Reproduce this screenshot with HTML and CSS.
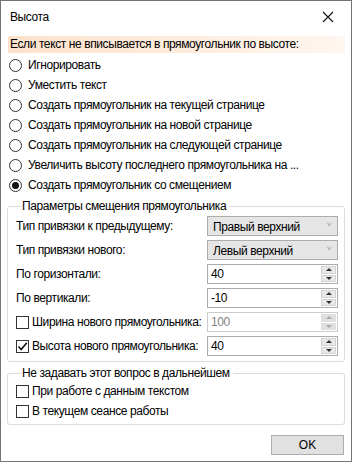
FILE: index.html
```html
<!DOCTYPE html>
<html lang="ru">
<head>
  <meta charset="UTF-8">
  <title>Высота</title>
  <link rel="stylesheet" href="styles.css">
</head>
<body>
  <div class="window">
    <div class="titlebar">
      <span class="title">Высота</span>
      <svg class="close" width="12" height="12" viewBox="0 0 12 12">
        <path d="M1 1 L11 11 M11 1 L1 11" stroke="#111" stroke-width="1.1" fill="none"/>
      </svg>
    </div>
    <div class="content">
      <div class="banner">Если текст не вписывается в прямоугольник по высоте:</div>
      <div class="radios">
        <label class="radio"><span class="dot"></span>Игнорировать</label>
        <label class="radio"><span class="dot"></span>Уместить текст</label>
        <label class="radio"><span class="dot"></span>Создать прямоугольник на текущей странице</label>
        <label class="radio"><span class="dot"></span>Создать прямоугольник на новой странице</label>
        <label class="radio"><span class="dot"></span>Создать прямоугольник на следующей странице</label>
        <label class="radio"><span class="dot"></span>Увеличить высоту последнего прямоугольника на ...</label>
        <label class="radio"><span class="dot on"></span>Создать прямоугольник со смещением</label>
      </div>

      <fieldset class="group params">
        <legend>Параметры смещения прямоугольника</legend>
        <div class="row">
          <span class="label">Тип привязки к предыдущему:</span>
          <div class="combo">Правый верхний<span class="chev">&#709;</span></div>
        </div>
        <div class="row">
          <span class="label">Тип привязки нового:</span>
          <div class="combo">Левый верхний<span class="chev">&#709;</span></div>
        </div>
        <div class="row spaced">
          <span class="label">По горизонтали:</span>
          <div class="spin"><span class="val">40</span><span class="btns"><i class="up"></i><i class="down"></i></span></div>
        </div>
        <div class="row">
          <span class="label">По вертикали:</span>
          <div class="spin"><span class="val">-10</span><span class="btns"><i class="up"></i><i class="down"></i></span></div>
        </div>
        <div class="row">
          <span class="label"><span class="check"></span>Ширина нового прямоугольника:</span>
          <div class="spin disabled"><span class="val">100</span><span class="btns"><i class="up"></i><i class="down"></i></span></div>
        </div>
        <div class="row">
          <span class="label"><span class="check on">
            <svg width="11" height="11" viewBox="0 0 11 11"><path d="M1.5 5.5 L4.2 8.5 L9.8 1.8" stroke="#111" stroke-width="1.6" fill="none"/></svg>
          </span>Высота нового прямоугольника:</span>
          <div class="spin"><span class="val">40</span><span class="btns"><i class="up"></i><i class="down"></i></span></div>
        </div>
      </fieldset>

      <fieldset class="group ask">
        <legend>Не задавать этот вопрос в дальнейшем</legend>
        <label class="cbrow"><span class="check"></span>При работе с данным текстом</label>
        <label class="cbrow"><span class="check"></span>В текущем сеансе работы</label>
      </fieldset>

      <div class="footer">
        <button class="btn">OK</button>
      </div>
    </div>
  </div>
</body>
</html>
```

FILE: styles.css
```css
* {
  margin: 0;
  padding: 0;
  box-sizing: border-box;
}
body {
  font-family: "Liberation Sans", Arial, sans-serif;
  font-size: 12px;
  letter-spacing: -0.4px;
  color: #000;
  background: #fff;
}
.window {
  width: 352px;
  height: 462px;
  border: 1px solid #747474;
  background: #fff;
}
.titlebar {
  height: 34px;
  display: flex;
  align-items: center;
  justify-content: space-between;
  padding: 0 17px 3px 9px;
}
.content {
  padding: 0 6px 0 6px;
}
.banner {
  height: 17px;
  line-height: 17px;
  padding-left: 2px;
  margin: 1px 0 0 1px;
  background: linear-gradient(to right, #fde2cb, #fff6ef);
}
.radios {
  margin-top: 2px;
}
.radio {
  height: 20px;
  display: flex;
  align-items: center;
  padding-left: 2px;
}
.dot {
  width: 13px;
  height: 13px;
  border: 1px solid #333;
  border-radius: 50%;
  margin-right: 6px;
  display: flex;
  align-items: center;
  justify-content: center;
}
.dot.on::after {
  content: "";
  width: 7px;
  height: 7px;
  border-radius: 50%;
  background: #111;
}
.group {
  border: 1px solid #dcdcdc;
  border-radius: 3px;
  margin-top: 3px;
  padding: 2px 6px 5px 8px;
}
.group legend {
  margin-left: 6px;
  padding: 0 3px 0 0;
  line-height: 16px;
}
.row {
  display: flex;
  align-items: center;
  justify-content: space-between;
  height: 20px;
  margin-bottom: 4px;
}
.row.spaced {
  margin-top: 2px;
}
.row:last-child {
  margin-bottom: 0;
}
.label {
  display: flex;
  align-items: center;
  white-space: nowrap;
}
.combo {
  flex: none;
  width: 131px;
  height: 20px;
  border: 1px solid #acacac;
  background: #e5e5e5;
  display: flex;
  align-items: center;
  justify-content: space-between;
  padding: 2px 6px 0 5px;
}
.chev {
  color: #9a9a9a;
  font-size: 8px;
  margin-top: -6px;
}
.spin {
  flex: none;
  width: 131px;
  height: 20px;
  border: 1px solid #ababab;
  background: #fff;
  display: flex;
  align-items: center;
  justify-content: space-between;
  padding: 0 1px 0 3px;
}
.btns {
  width: 15px;
  height: 16px;
  display: flex;
  flex-direction: column;
  gap: 1px;
}
.btns i {
  flex: 1;
  background: #e8e8e8;
  border: 1px solid #d2d2d2;
  display: flex;
  align-items: center;
  justify-content: center;
}
.btns i::after {
  content: "";
  border-left: 3px solid transparent;
  border-right: 3px solid transparent;
}
.btns .up::after {
  border-bottom: 3px solid #333;
}
.btns .down::after {
  border-top: 3px solid #333;
}
.spin.disabled {
  border-color: #cccccc;
  color: #838383;
}
.spin.disabled .btns i {
  background: #e0e0e0;
  border-color: #e0e0e0;
}
.spin.disabled .btns .up::after {
  border-bottom-color: #aaa;
}
.spin.disabled .btns .down::after {
  border-top-color: #aaa;
}
.check {
  width: 13px;
  height: 13px;
  border: 1px solid #333;
  background: #fff;
  margin-right: 3px;
  display: flex;
  align-items: center;
  justify-content: center;
}
.cbrow {
  display: flex;
  align-items: center;
  height: 20px;
}
.ask {
  margin-top: 3px;
  padding-top: 0;
  padding-bottom: 3px;
}
.footer {
  display: flex;
  justify-content: flex-end;
  padding: 10px 1px 0 0;
}
.btn {
  width: 73px;
  height: 20px;
  font-family: inherit;
  font-size: 12px;
  background: #e1e1e1;
  border: 1px solid #adadad;
}
```
